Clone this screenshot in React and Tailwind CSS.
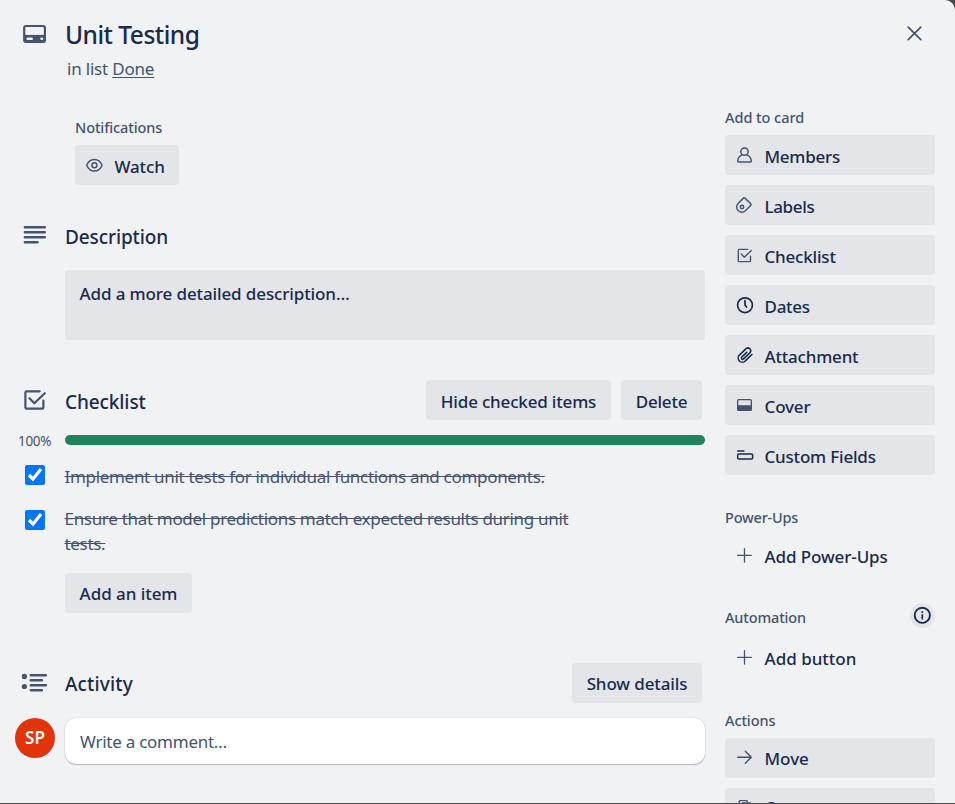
import React from "react";

const Svg = ({ children, w = 1.4, className = "size-5 shrink-0 text-[#44546f]", box = "0 0 20 20" }) => (
  <svg viewBox={box} className={className} fill="none" stroke="currentColor" strokeWidth={w} strokeLinecap="round" strokeLinejoin="round">
    {children}
  </svg>
);

const DARK = "size-5 shrink-0 text-[#172b4d]";
const BIG = "ml-5 mr-[15px] size-[30px] shrink-0 text-[#44546f]";

const icons = {
  member: (
    <Svg w={1.5}>
      <circle cx="9.5" cy="6.6" r="3.7" />
      <path d="M7 9.9C4.4 11 2.8 13.6 2.7 16.3q0 .7.7.7h12.200q.7 0 .7-.7C16.200 13.600 14.600 11 12 9.900" />
    </Svg>
  ),
  label: (
    <Svg w={1.5}>
      <path d="M8.500 3.100 3.300 8.200a5.200 5.200 0 0 0-.2 7.400 5.200 5.200 0 0 0 7.300.1l5.400-5.500a1 1 0 0 0 0-1.400L10 3.100a1 1 0 0 0-1.500 0Z" />
      <circle cx="7" cy="12" r="1.700" />
    </Svg>
  ),
  check: (
    <Svg w={1.4}>
      <path d="M12.700 4.400H4.100q-.8 0-.8.8v10.600q0 .8.8.8h10.600q.8 0 .8-.8v-4.600" />
      <path d="m6.300 9 3 3.300 7-6.700" />
    </Svg>
  ),
  clock: (
    <Svg w={1.7} className={DARK}>
      <circle cx="10" cy="10.200" r="7.400" />
      <path d="M10 5.500v4.600l1.500 2" />
    </Svg>
  ),
  clip: (
    <Svg w={2} className={DARK} box="-1.800 -1.200 26 26">
      <path d="m20.200 11.200-8.600 8.300a5.400 5.400 0 0 1-7.700-7.600l8.700-8.400a3.700 3.700 0 0 1 5.200 5.200l-8.400 8.200a1.650 1.650 0 0 1-2.300-2.400l6.300-6.100" />
    </Svg>
  ),
  cover: (
    <Svg w={1.300}>
      <rect x="2.650" y="4.650" width="13.700" height="10.700" rx="1" />
      <path d="M3 11h13v4H3Z" fill="currentColor" />
    </Svg>
  ),
  fields: (
    <Svg w={1.500} className={DARK}>
      <path d="M2.700 5.900h6.200" />
      <rect x="2.700" y="8.900" width="14.900" height="5.200" rx="1" />
    </Svg>
  ),
  plus: (
    <Svg w={1.300}>
      <path d="M9.500 3.600v13.500M2.700 10.400h13.600" />
    </Svg>
  ),
  arrow: (
    <Svg w={1.400}>
      <path d="M2.700 9.300h13.600M10.300 3.300l6 6-6 6" />
    </Svg>
  ),
  copy: (
    <Svg w={1.300}>
      <path d="M5.500 11.500H5q-.8 0-.8-.8V3.500q0-.8.8-.8h6.500q.8 0 .8.8" />
      <rect x="7.200" y="4.900" width="8.500" height="10.500" rx="0.800" />
    </Svg>
  ),
};

const FONT = "font-['Noto_Sans','Open_Sans',sans-serif]";

function Button({ children, className = "" }) {
  return (
    <button className={`flex h-10 shrink-0 items-center rounded-[4px] bg-[#e4e5e9] text-[17px] font-medium whitespace-nowrap text-[#172b4d] ${className}`}>
      {children}
    </button>
  );
}

function SideButton({ icon, label, track, plain, shift = "mt-[3px]" }) {
  return (
    <button className={`flex h-10 w-[210px] shrink-0 items-center gap-[9.5px] rounded-[4px] pl-[10px] ${plain ? "" : "bg-[#e4e5e9]"}`}>
      {icons[icon]}
      <span className={`text-[17px] font-medium whitespace-nowrap text-[#172b4d] ${shift} ${track}`}>{label}</span>
    </button>
  );
}

function Heading({ children, className = "" }) {
  return <h3 className={`h-5 shrink-0 text-[14.5px] leading-5 font-medium whitespace-nowrap text-[#44546f] ${className}`}>{children}</h3>;
}

function Item({ children, className, textClass }) {
  return (
    <label className={`flex items-start ${className}`}>
      <input type="checkbox" defaultChecked className="mr-[19.5px] ml-[25px] size-5 shrink-0 accent-[#0075ff]" />
      <span className={`text-[17px] leading-[25px] whitespace-nowrap text-[#44546f] line-through ${textClass}`}>{children}</span>
    </label>
  );
}

export default function App() {
  return (
    <div className="h-[804px] w-[955px] overflow-hidden bg-[#4a4a4a]">
      <div className={`flex h-[803px] overflow-hidden rounded-tr-[10px] bg-[#f1f2f4] ${FONT}`}>
        <main className="flex w-[705px] shrink-0 flex-col">
          <header className="flex h-[118px] shrink-0 items-start pt-[19px]">
            <Svg w={2.200} className={BIG} box="0 0 30 30">
              <rect x="4.200" y="7" width="20.700" height="15.900" rx="1.800" />
              <path fill="currentColor" stroke="none" d="M4 15.900h21v7H4Z" />
              <path stroke="#f1f2f4" strokeWidth="2.600" d="M7.700 19.700h4M21.600 19.700h.4" />
            </Svg>
            <div>
              <h1 className="h-8 text-[24.500px] leading-8 font-medium tracking-[-0.5px] text-[#172b4d]">Unit Testing</h1>
              <p className="mt-[5px] ml-[2px] text-[17px] leading-[26px] tracking-[-0.2px] text-[#44546f]">
                in list <a className="underline underline-offset-2">Done</a>
              </p>
            </div>
          </header>

          <section className="ml-[75px] h-[67px] shrink-0">
            <Heading className="-mt-px mb-[8px] tracking-[-0.1px]">Notifications</Heading>
            <Button className="w-[104px] gap-[9.5px] pt-[3px] pl-[10px]">
              <Svg className="-mt-[3px] size-5 shrink-0 text-[#44546f]" w={1.5}>
                <path d="M1.700 10.200C3.200 6.600 6 4.400 9.400 4.400s6.200 2.200 7.700 5.800c-1.500 3.600-4.300 5.900-7.700 5.900s-6.200-2.300-7.700-5.900Z" />
                <circle cx="9.400" cy="10.200" r="2.500" />
              </Svg>
              <span className="tracking-[-0.15px]">Watch</span>
            </Button>
          </section>

          <section className="flex h-[195px] shrink-0 flex-col pt-[35px]">
            <div className="flex h-[30px] items-center">
              <Svg w={2.500} className={BIG} box="0 0 30 30">
                <path d="M4.900 7.300h19.900M4.900 12.300h19.900M4.900 17.300h19.900M4.900 22.300h12.600" />
              </Svg>
              <h2 className="mt-[4px] text-[19px] leading-[30px] font-medium tracking-[-0.1px] text-[#172b4d]">Description</h2>
            </div>
            <div className="mt-5 ml-[65px] h-[70px] rounded-[4px] bg-[#e4e5e9] px-[14.5px] pt-[11px] text-[17px] leading-[25px] font-medium tracking-[-0.12px] text-[#172b4d]">
              Add a more detailed description…
            </div>
          </section>

          <section className="flex h-[283px] shrink-0 flex-col">
            <div className="flex h-10 items-center pr-[3px]">
              <Svg w={2.200} className={BIG} box="0 0 30 30">
                <path d="M19.700 6.300H6.500q-1.100 0-1.100 1.100v15.200q0 1.100 1.100 1.100h15.800q1.100 0 1.100-1.100V15.500" />
                <path d="m9.500 13.300 4.800 4.900L24.800 8.200" />
              </Svg>
              <h2 className="mt-[4px] grow text-[19px] leading-[30px] font-medium tracking-[-0.1px] text-[#172b4d]">Checklist</h2>
              <Button className="mr-[10px] w-[185px] justify-center pt-[3px] tracking-[-0.18px]">Hide checked items</Button>
              <Button className="w-[81px] justify-center pt-[3px] tracking-[-0.2px]">Delete</Button>
            </div>
            <div className="mt-[10px] flex h-5 items-center">
              <span className="mt-[2px] w-[65px] pl-[18px] text-[13.500px] tracking-[-0.3px] text-[#44546f]">100%</span>
              <div className="h-[10px] grow rounded-full bg-[#1f845a]" />
            </div>
            <Item className="mt-[15px] h-[45px]" textClass="-mt-px tracking-[-0.31px]">
              Implement unit tests for individual functions and components.
            </Item>
            <Item className="h-[63px]" textClass="-mt-[4px] tracking-[-0.31px]">
              Ensure that model predictions match expected results during unit
              <br />
              tests.
            </Item>
            <Button className="ml-[65px] w-[127px] justify-center pt-px tracking-[-0.05px]">Add an item</Button>
          </section>

          <section className="flex shrink-0 flex-col">
            <div className="flex h-10 items-center pr-[3px]">
              <Svg w={2.600} className={BIG} box="0 0 30 30">
                <g fill="currentColor" stroke="none">
                  <circle cx="4.400" cy="8.400" r="2.600" />
                  <circle cx="4.400" cy="18.500" r="2.600" />
                </g>
                <path d="M10.800 7.200h15M10.800 12.200h11M10.800 17.300h15M10.800 22.300h11" />
              </Svg>
              <h2 className="mt-[2px] grow text-[19px] leading-[30px] font-medium tracking-[0.15px] text-[#172b4d]">Activity</h2>
              <Button className="w-[130px] justify-center pt-[2px] tracking-[-0.12px]">Show details</Button>
            </div>
            <div className="mt-[15px] flex items-start">
              <div className="mr-[10px] ml-[15px] flex size-10 shrink-0 items-center justify-center rounded-full bg-[#e0350b] text-[17px] font-semibold text-white">SP</div>
              <div className="h-[46px] grow rounded-[11px] bg-white px-[15px] pt-[11px] text-[17px] leading-[26px] tracking-[-0.25px] text-[#44546f] shadow-[0_1px_1px_#091e4240,0_0_1px_#091e424f]">
                Write a comment…
              </div>
            </div>
          </section>
        </main>

        <aside className="ml-5 flex w-[210px] shrink-0 flex-col">
          <div className="flex h-[107px] shrink-0 items-start justify-end pt-[23px] pr-[10px]">
            <Svg w={1.700}>
              <path d="M3.200 4.100l12.600 12.600M15.800 4.100L3.200 16.700" />
            </Svg>
          </div>
          <Heading className="mb-[8px] tracking-[-0.05px]">Add to card</Heading>
          <div className="flex shrink-0 flex-col gap-[10px]">
            <SideButton icon="member" label="Members" track="tracking-[-0.25px]" />
            <SideButton icon="label" label="Labels" track="tracking-[-0.35px]" />
            <SideButton icon="check" label="Checklist" track="tracking-[-0.2px]" />
            <SideButton icon="clock" label="Dates" track="tracking-[-0.3px]" />
            <SideButton icon="clip" label="Attachment" track="tracking-[-0.2px]" />
            <SideButton icon="cover" label="Cover" track="tracking-[-0.15px]" />
            <SideButton icon="fields" label="Custom Fields" track="tracking-[-0.2px]" />
          </div>
          <Heading className="mt-[32px] mb-[8px] tracking-[-0.2px]">Power-Ups</Heading>
          <SideButton plain icon="plus" label="Add Power-Ups" track="tracking-[-0.1px]" />
          <div className="mt-[28px] flex h-[25px] shrink-0 items-center justify-between">
            <Heading className="mt-[3px] tracking-[-0.15px]">Automation</Heading>
            <Svg w={1.900} className="size-[25px] shrink-0 rounded-full bg-[#e4e5e9] text-[#172b4d]" box="0 0 25 25">
              <circle cx="12.300" cy="12.300" r="7.600" />
              <path strokeLinecap="butt" strokeWidth="1.700" d="M12.300 11.200v5.200M12.300 8.200v1.800" />
            </Svg>
          </div>
          <div className="mt-[9px] shrink-0">
            <SideButton plain icon="plus" label="Add button" track="tracking-0" />
          </div>
          <Heading className="mt-[33px] mb-[8px] tracking-[-0.1px]">Actions</Heading>
          <div className="flex shrink-0 flex-col gap-[10px]">
            <SideButton icon="arrow" label="Move" track="tracking-0" shift="mt-[2px]" />
            <SideButton icon="copy" label="Copy" track="tracking-[-0.1px]" shift="mt-0" />
          </div>
        </aside>
      </div>
    </div>
  );
}
